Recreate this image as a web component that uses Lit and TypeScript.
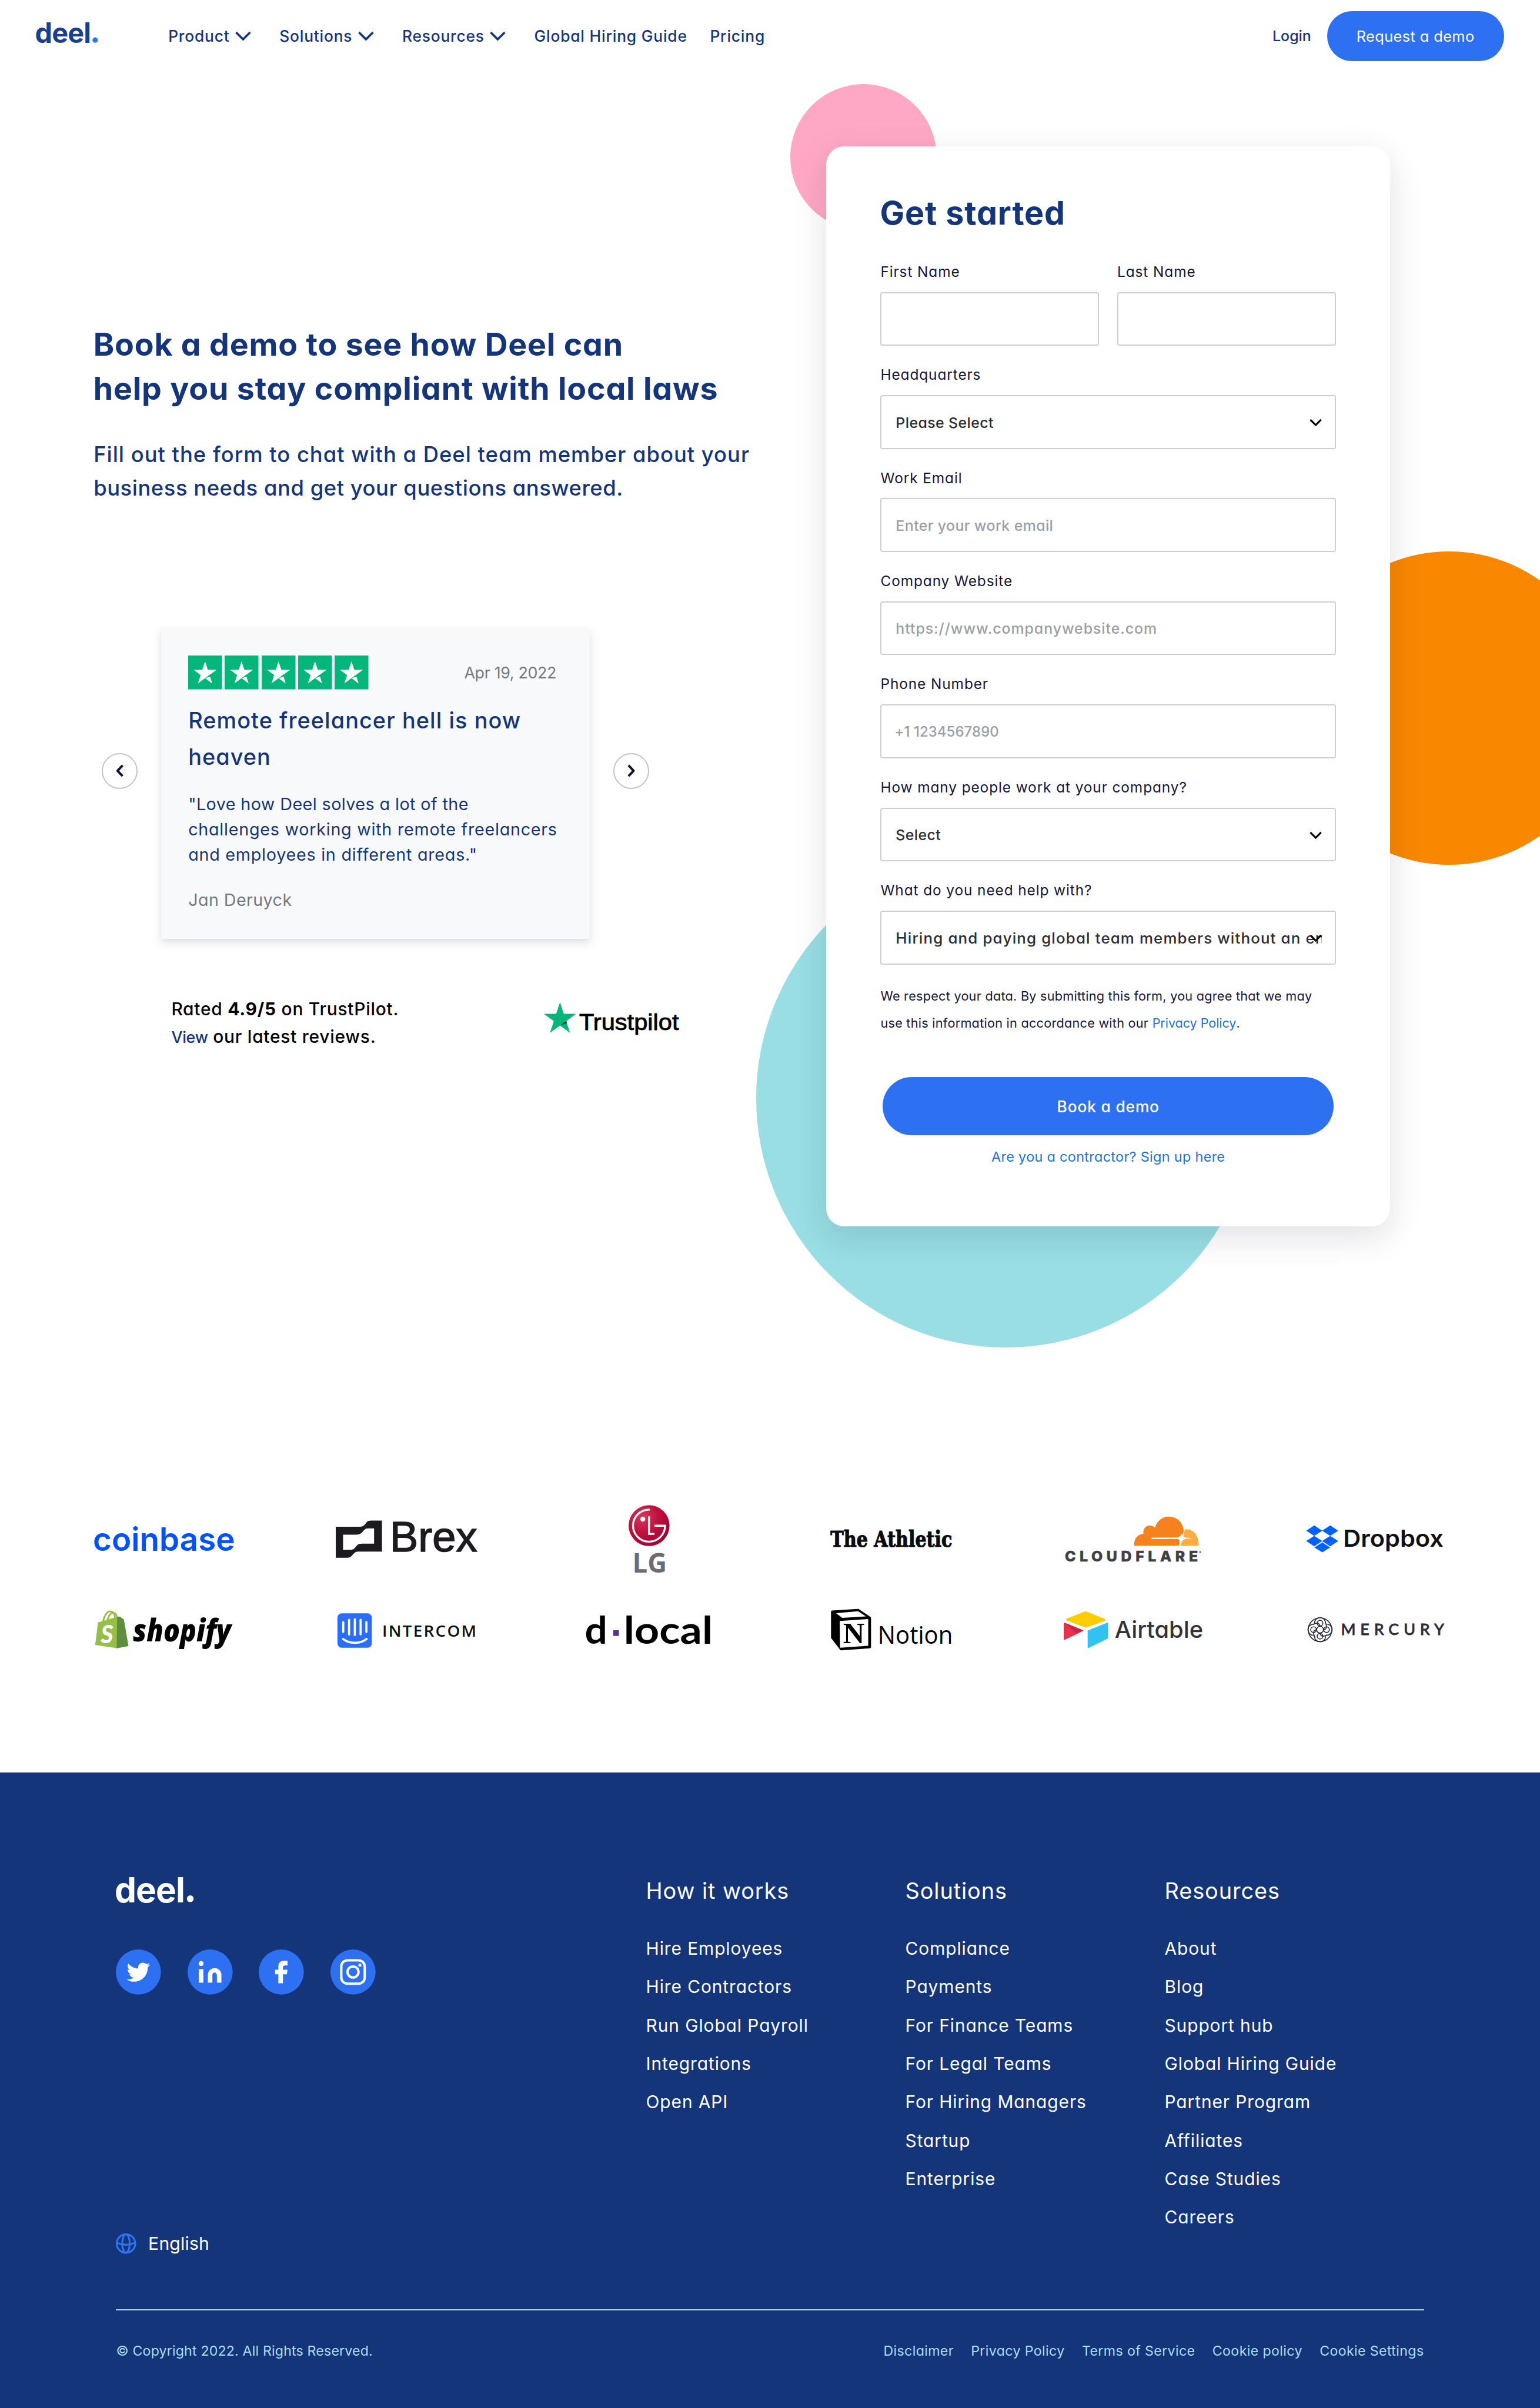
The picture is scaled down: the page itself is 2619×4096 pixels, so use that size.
import { LitElement, html, svg, css, nothing } from "lit";
import { customElement } from "lit/decorators.js";

const base = css`
  :host { display: block; box-sizing: border-box; }
  *, *::before, *::after { box-sizing: border-box; }
  h1, h2, h3, p, ul { margin: 0; padding: 0; font-weight: inherit; font-size: inherit; }
  a { color: inherit; text-decoration: none; }
  svg { display: block; flex: none; overflow: visible; }
`;

const deelLogo = (width: number, height: number, color: string, dot: string) => html`
  <svg width=${width} height=${height} viewBox="0 0 138 47" role="img" aria-label="deel">
    <text x="-2" y="46.5" font-family="Inter" font-weight="700" font-size="62" fill=${color}
      textLength="124" lengthAdjust="spacingAndGlyphs" letter-spacing="-1">deel</text>
    <circle cx="132" cy="40.5" r="6" fill=${dot}></circle>
  </svg>`;

/* ---------- Header ---------- */

const navItems = [
  { label: "Product", menu: true },
  { label: "Solutions", menu: true },
  { label: "Resources", menu: true },
  { label: "Global Hiring Guide", menu: false },
  { label: "Pricing", menu: false },
];

@customElement("site-header")
export class SiteHeader extends LitElement {
  static styles = [base, css`
    .bar { display: flex; align-items: center; height: 128px; padding: 0 64px; color: #15357a; font-size: 27.5px; font-weight: 500; }
    .logo { margin-right: 124.5px; margin-top: -13px; }
    .nav { display: flex; gap: 40.4px; letter-spacing: 0.82px; }
    .link { display: flex; align-items: center; gap: 10px; }
    .caret { margin-right: 10px; }
    .login { font-size: 26px; }
    .actions { display: flex; align-items: center; gap: 28px; margin-left: auto; }
    .cta { display: flex; align-items: center; justify-content: center; width: 314px; height: 88px; border-radius: 44px;
      background: #2d71f2; color: #fff; font-size: 26.5px; font-weight: 400; letter-spacing: 0.4px; }
  `];
  render() {
    return html`<header class="bar">
      <a class="logo">${deelLogo(110, 38, "#1b3f8f", "#2e74f3")}</a>
      <nav class="nav">
        ${navItems.map(i => html`<a class="link">${i.label}${i.menu ? html`
          <svg class="caret" width="28" height="17" viewBox="0 0 28 17" fill="none" stroke="#15357a" stroke-width="3.8"><path d="M1.5 2l12.5 12.5L26.5 2"></path></svg>` : nothing}</a>`)}
      </nav>
      <div class="actions"><a class="login">Login</a><a class="cta">Request a demo</a></div>
    </header>`;
  }
}

/* ---------- Reviews ---------- */

@customElement("review-carousel")
export class ReviewCarousel extends LitElement {
  static styles = [base, css`
    .row { display: flex; align-items: center; margin-left: 11px; }
    .arrow { display: flex; align-items: center; justify-content: center; width: 64px; height: 64px; margin-bottom: 44px;
      border: 2.1px solid #c4c4c8; border-radius: 50%; background: #fff; flex: none; }
    .card { width: 760px; height: 551px; margin: 0 42px; padding: 48.5px 59px 0 48px; background: #f8f9fb;
      box-shadow: 0 8px 16px rgba(30, 40, 60, 0.13), 0 2px 8px rgba(30, 40, 60, 0.04); flex: none; }
    .head { display: flex; align-items: center; justify-content: space-between; height: 60px; }
    .stars { display: flex; gap: 5px; }
    .date { font-size: 28px; letter-spacing: -0.35px; color: #777782; }
    .title { margin-top: 24px; font-size: 39.5px; line-height: 64px; font-weight: 500; letter-spacing: 1.1px; color: #15357a; }
    .quote { margin-top: 28.5px; font-size: 30px; line-height: 45px; letter-spacing: 0.76px; color: #15357a; white-space: nowrap; }
    .first { letter-spacing: 0.42px; }
    .author { margin-top: 36px; font-size: 30px; line-height: 45px; letter-spacing: 0.4px; color: #777782; }
    .summary { display: flex; margin: 101px 0 0 135px; width: 901px; justify-content: space-between; align-items: flex-start; }
    .rating { font-size: 31.2px; line-height: 48px; font-weight: 500; letter-spacing: 0.78px; color: #000; }
    .view { font-size: 28px; letter-spacing: -0.3px; color: #15357a; }
    .pilot { margin-top: 10.5px; }
  `];
  render() {
    const star = svg`<rect width="60" height="60" fill="#04b67a"></rect>
      <path d="M30 10.5L34.9 25.2H50.6L38 34.3L30 40L39 37.8L42.6 49.5L30 40.2L17.4 49.5L22.2 34.6L9.6 25.2H25.1Z" fill="#fff"></path>`;
    return html`
      <div class="row">
        <a class="arrow"><svg width="14" height="23" viewBox="0 0 14 23" fill="none" stroke="#10122e" stroke-width="4.2" stroke-linejoin="round"><path d="M12 2L3 11.5L12 21"></path></svg></a>
        <article class="card">
          <div class="head">
            <div class="stars">${[1, 2, 3, 4, 5].map(() => html`<svg width="60" height="60" viewBox="0 0 60 60">${star}</svg>`)}</div>
            <span class="date">Apr 19, 2022</span>
          </div>
          <h3 class="title">Remote freelancer hell is now<br>heaven</h3>
          <p class="quote"><span class="first">"Love how Deel solves a lot of the</span><br>challenges working with remote freelancers<br>and employees in different areas."</p>
          <p class="author">Jan Deruyck</p>
        </article>
        <a class="arrow"><svg width="14" height="23" viewBox="0 0 14 23" fill="none" stroke="#10122e" stroke-width="4.2" stroke-linejoin="round"><path d="M2 2L11 11.5L2 21"></path></svg></a>
      </div>
      <div class="summary">
        <p class="rating">Rated <b>4.9/5</b> on TrustPilot.<br><a class="view">View</a> our latest reviews.</p>
        <svg class="pilot" width="240" height="60" viewBox="0 0 240 60">
          <path d="M28.5 1L35.3 21.4H57L39.6 34.4L46.2 55L28.5 42.3L10.8 55L17.6 34.4L0 21.4H21.7Z" fill="#04b67a"></path>
          <path d="M41 38L39.5 33.8L28.5 42.3Z" fill="#0b4b33"></path>
          <text x="62.5" y="50.5" font-family="Liberation Sans" font-weight="400" font-size="41" fill="#000" stroke="#000" stroke-width="0.9" textLength="177" lengthAdjust="spacingAndGlyphs">Trustpilot</text>
        </svg>
      </div>`;
  }
}

/* ---------- Form ---------- */

type Field = { label: string; value?: string; hint?: string; select?: boolean; half?: boolean; spacing?: string };

const fields: Field[] = [
  { label: "First Name", half: true },
  { label: "Last Name", half: true },
  { label: "Headquarters", value: "Please Select", select: true },
  { label: "Work Email", hint: "Enter your work email" },
  { label: "Company Website", hint: "https://www.companywebsite.com", spacing: "url" },
  { label: "Phone Number", hint: "+1 1234567890", spacing: "phone" },
  { label: "How many people work at your company?", value: "Select", select: true },
  { label: "What do you need help with?", value: "Hiring and paying global team members without an entity", select: true, spacing: "wide" },
];

@customElement("demo-form")
export class DemoForm extends LitElement {
  static styles = [base, css`
    .card { width: 1000px; height: 1916px; padding: 87px 96px 0; border-radius: 32px; background: #fff; color: #15173a;
      box-shadow: 0 18px 60px rgba(20, 24, 50, 0.13); }
    .heading { font-size: 58px; line-height: 60px; font-weight: 700; letter-spacing: 0.9px; margin-left: -1px; color: #15357a; }
    .fields { display: grid; grid-template-columns: 1fr 1fr; column-gap: 32px; row-gap: 35.4px; margin-top: 59px; }
    .field { grid-column: span 2; min-width: 0; }
    .half { grid-column: span 1; }
    .label { display: block; font-size: 25.5px; line-height: 32px; letter-spacing: 0.92px; }
    .control { position: relative; display: flex; align-items: center; height: 95.6px; margin-top: 20px; padding: 0 23px 0 25px;
      border: 2.1px solid #cfcfd2; border-radius: 4px; font-size: 26px; font-weight: 500; letter-spacing: 0.4px; color: #2c2c34; }
    .text { flex: 1; overflow: hidden; white-space: nowrap; line-height: 40px; margin-top: 2px; }
    .hint { color: #9a9fa3; }
    .url { letter-spacing: 0.97px; }
    .phone { font-size: 25px; letter-spacing: 0.06px; margin-left: -2px; }
    .wide { font-size: 27px; letter-spacing: 1.18px; }
    .caret { position: absolute; right: 23px; top: 40px; }
    .legal { margin-top: 31.8px; font-size: 22.6px; line-height: 48px; letter-spacing: 0.26px; white-space: nowrap; }
    .blue { letter-spacing: -0.1px; color: #1d74d0; }
    .submit { display: flex; align-items: center; justify-content: center; height: 104px; margin: 71.6px 4px 0; border-radius: 52px;
      background: #2d71f2; color: #fff; font-size: 27.5px; font-weight: 500; letter-spacing: 0.85px; }
    .contractor { display: block; margin-top: 22px; text-align: center; font-size: 24.5px; line-height: 32px; letter-spacing: 0.3px; color: #1d74d0; }
  `];
  render() {
    return html`<section class="card">
      <h2 class="heading">Get started</h2>
      <div class="fields">
        ${fields.map(f => html`<div class="field ${f.half ? "half" : ""}">
          <span class="label">${f.label}</span>
          <div class="control">
            ${f.value || f.hint ? html`<span class="text ${f.hint ? "hint" : ""} ${f.spacing ?? ""}">${f.value ?? f.hint}</span>` : nothing}
            ${f.select ? html`<svg class="caret" width="22" height="14" viewBox="0 0 22 14" fill="none" stroke="#000" stroke-width="3.2"><path d="M1.5 2L11 11.5L20.5 2"></path></svg>` : nothing}
          </div>
        </div>`)}
      </div>
      <p class="legal">We respect your data. By submitting this form, you agree that we may<br>use this information in accordance with our <a class="blue">Privacy Policy</a>.</p>
      <a class="submit">Book a demo</a>
      <a class="contractor">Are you a contractor? Sign up here</a>
    </section>`;
  }
}

/* ---------- Customer logos ---------- */

const word = (text: string, x: number, y: number, length: number, size: number, weight: number, fill: string, family = "Inter", slant = "normal") =>
  svg`<text x=${x} y=${y} textLength=${length} lengthAdjust="spacingAndGlyphs" font-size=${size} font-weight=${weight}
    font-family=${family} font-style=${slant} fill=${fill}>${text}</text>`;

const spaced = (text: string, x: number, y: number, length: number, size: number, weight: number, fill: string, family = "Inter") =>
  svg`<text x=${x} y=${y} textLength=${length} font-size=${size} font-weight=${weight} font-family=${family} fill=${fill}>${text}</text>`;

const logos = [
  svg`${word("coinbase", -1, 92, 252, 58, 600, "#0052ff")}`,

  svg`<path fill="#1d1a20" fill-rule="evenodd" d="M0 49H43C49 49 51 46 54 42C56 39 59 38 63 38H82V93H40C35 93 32 96 29 100C27 103 24 104 20 104H0ZM13 63V90H26C33 90 34 86 37 83C39 80 42 79 47 79H68V52H58C52 52 50 55 47 59C44 62 41 63 36 63Z"></path>
    <g stroke="#1d1a20" stroke-width="1.6">${word("Brex", 96, 93, 155, 75, 400, "#1d1a20", "Liberation Sans")}</g>`,

  svg`<defs><radialGradient id="lg" cx="0.35" cy="0.3" r="0.8"><stop offset="0" stop-color="#d5385f"></stop><stop offset="0.5" stop-color="#bf0f3d"></stop><stop offset="1" stop-color="#9c0030"></stop></radialGradient></defs>
    <circle cx="125" cy="47" r="36.3" fill="url(#lg)"></circle>
    <g fill="none" stroke="#fff" stroke-width="3.4"><path d="M126.5 18.6A28.5 28.5 0 1 0 153.5 47.2H134.5"></path><path d="M125 30.5V61.8H134.5"></path></g>
    <circle cx="113.8" cy="35.5" r="4.4" fill="#fff"></circle>
    ${word("LG", 95.5, 130, 61, 48, 700, "#6b6d70", "Open Sans")}`,

  svg`<g stroke="#0c0c0c" stroke-width="1.3">${word("The Athletic", 17, 85, 216, 38.5, 700, "#0c0c0c", "DejaVu Serif")}</g>`,

  svg`<path fill="#f6821f" d="M126 82.7C125 71 132 62 142.5 61.5C141 53 147 46.5 154 47C158 47 161 48.5 163 50.5C166 39 176 31 187.5 31C202 31 212 41 214 55C214 60 212 63 209 66L206 75C207 78 206 81 205 82.7Z"></path>
    <path fill="#fbad41" d="M208 82.7L212 70C214 64 215 58 216 53.5C231 52 241 64 240.5 82.7Z"></path>
    <path fill="#fff" d="M157 68.4L203 68Q209 66 210.5 61Q212 67 218 68.3L230 69.4L218 70.5Q212 72 210 77Q208 72 203 71L157 70.6Z"></path>
    <g stroke="#404041" stroke-width="0.6">${spaced("CLOUDFLARE", 3, 110.7, 236, 26, 800, "#404041")}</g>
    <circle cx="243" cy="94" r="1.4" fill="#404041"></circle>`,

  svg`<path fill="#0061ff" d="M15.7 46.8L30 56L15.7 65.2L1.5 56ZM44 46.8L58.3 56L44 65.2L29.7 56ZM15.7 65.2L30 74.4L15.7 83.6L1.5 74.4ZM44 65.2L58.3 74.4L44 83.6L29.7 74.4ZM30 76.8L44 85.9L30 94.5L16 85.9Z"></path>
    ${word("Dropbox", 67, 85, 178, 41, 600, "#111")}`,

  svg`<g fill="none" stroke="#95bf47" stroke-width="3"><path d="M17 55C20 42 26 37 30 37.5C36 38 38 43 38 49"></path><path d="M25 53C27 43 32 40 35 40C39 40 41 44 41.5 48"></path></g>
    <path fill="#95bf47" d="M8 57L43 46.7V103L3 97Z"></path><path fill="#5e8e3e" d="M42 46.7L47 47L54 52L62 99L41 103Z"></path>
    ${word("S", 13, 93.5, 22, 44, 900, "#fff", "Lato", "italic")}
    ${word("shopify", 70, 91, 174, 55, 800, "#000", "Open Sans", "italic")}`,

  svg`<rect x="3" y="41" width="61" height="61" rx="7.5" fill="#286efa"></rect>
    <path d="M13.3 56.5V74M23.6 52.5V78.5M33.8 51.5V79.5M44 52.5V78.5M54.3 56.5V74M13 86.5C24 95.5 44 95.5 54.6 86.5" fill="none" stroke="#fff" stroke-width="3.8" stroke-linecap="round"></path>
    ${spaced("INTERCOM", 82.5, 82.7, 167, 29, 600, "#111", "Open Sans")}`,

  svg`${word("d", 11, 95, 40, 67, 700, "#000", "Lato")}<rect x="61.5" y="71" width="10" height="10" fill="#5a2d91"></rect>${word("local", 80, 95, 158, 67, 700, "#000", "Lato")}`,

  svg`<path fill="#000" stroke="#000" stroke-width="4" stroke-linejoin="round" d="M20 38L66 35L87 49V101L36 104.7L20 84Z"></path>
    <path fill="#fff" d="M27 40.7L66 37.3L80 46.5L38 49Z"></path><path fill="#fff" stroke="#fff" stroke-width="2" stroke-linejoin="round" d="M34.5 55.5L83 52V97.5L35 101Z"></path>
    ${word("N", 39.5, 94.3, 38, 53, 700, "#000", "Liberation Serif")}
    ${word("Notion", 101, 94.7, 133, 44, 400, "#000", "Open Sans")}`,

  svg`<path fill="#ffcc00" stroke="#ffcc00" stroke-width="3" stroke-linejoin="round" d="M40 38.8L74 52.6L40.5 64.8L6.5 52Z"></path>
    <path fill="#ee2f4a" stroke="#ee2f4a" stroke-width="2" stroke-linejoin="round" d="M2 58.5L34.5 71.5L2 87.3Z"></path><path fill="#c22746" d="M3 58L36 71.3L24 76.5Z"></path>
    <path fill="#31c2f2" stroke="#31c2f2" stroke-width="2" stroke-linejoin="round" d="M44.5 72L78.7 58.5V85L44.5 101.5Z"></path>
    <g style="font-feature-settings:'cv11'">${word("Airtable", 91.5, 85, 157, 41.5, 500, "#333")}</g>`,

  svg`<g fill="none" stroke="#2b2b3c" stroke-width="1.7"><circle cx="26" cy="70" r="21"></circle><circle cx="26" cy="70" r="6"></circle>
      ${[0, 90, 180, 270].map(a => svg`<g transform="rotate(${a} 26 70)"><circle cx="26" cy="58.5" r="5"></circle><path d="M16 58.5A10 10 0 0 1 36 58.5"></path><path d="M32 70A6 6 0 0 0 37.5 64.5A16 16 0 0 0 35 57"></path></g>`)}</g>
    <g stroke="#2b2b3c" stroke-width="0.8">${spaced("MERCURY", 63, 79, 183, 28, 500, "#2b2b3c", "Lato")}</g>`,
];

@customElement("logo-wall")
export class LogoWall extends LitElement {
  static styles = [base, css`
    .grid { display: grid; grid-template-columns: repeat(6, 250px); column-gap: 180px; row-gap: 22px; padding: 0 166px; font-feature-settings: normal; }
  `];
  render() {
    return html`<div class="grid">${logos.map(l => html`<svg width="250" height="140" viewBox="0 0 250 140">${l}</svg>`)}</div>`;
  }
}

/* ---------- Footer ---------- */

const columns = [
  { title: "How it works", links: ["Hire Employees", "Hire Contractors", "Run Global Payroll", "Integrations", "Open API"] },
  { title: "Solutions", links: ["Compliance", "Payments", "For Finance Teams", "For Legal Teams", "For Hiring Managers", "Startup", "Enterprise"] },
  { title: "Resources", links: ["About", "Blog", "Support hub", "Global Hiring Guide", "Partner Program", "Affiliates", "Case Studies", "Careers"] },
];

const social = [
  svg`<path transform="translate(19.3 19.6) scale(1.73)" fill="#fff" d="M24 4.557c-.883.392-1.832.656-2.828.775 1.017-.609 1.798-1.574 2.165-2.724-.951.564-2.005.974-3.127 1.195-.897-.957-2.178-1.555-3.594-1.555-3.179 0-5.515 2.966-4.797 6.045-4.091-.205-7.719-2.165-10.148-5.144-1.29 2.213-.669 5.108 1.523 6.574-.806-.026-1.566-.247-2.229-.616-.054 2.281 1.581 4.415 3.949 4.89-.693.188-1.452.232-2.224.084.626 1.956 2.444 3.379 4.6 3.419-2.07 1.623-4.678 2.348-7.29 2.04 2.179 1.397 4.768 2.212 7.548 2.212 9.142 0 14.307-7.721 13.995-14.646.962-.695 1.797-1.562 2.457-2.549z"></path>`,
  svg`<circle cx="24" cy="25" r="4.3" fill="#fff"></circle><path fill="#fff" d="M20 35H28V59H20ZM36 59V45A12 12 0 0 1 60 45V59H52V45.5A4 4.6 0 0 0 44 45.5V59Z"></path>`,
  svg`<path fill="#fff" d="M29 36H34.8V31C34.8 24 38 20 45 20H51V28.4H47C44 28.4 43 29.4 43 32V36H51L50 44H43V60H34.8V44H29Z"></path>`,
  svg`<rect x="19.2" y="19.2" width="41.6" height="41.6" rx="11" fill="none" stroke="#fff" stroke-width="4.2"></rect><circle cx="40" cy="40" r="9.8" fill="none" stroke="#fff" stroke-width="4.2"></circle><circle cx="52.3" cy="27.8" r="2.7" fill="#fff"></circle>`,
];

@customElement("site-footer")
export class SiteFooter extends LitElement {
  static styles = [base, css`
    .footer { height: 1128px; padding: 184px 206px 0; background: #15357a; color: #fff; }
    .top { display: grid; grid-template-columns: 940px 460px 460px 1fr; height: 769px; }
    .brand { display: flex; flex-direction: column; }
    .social { display: flex; gap: 46.6px; margin-top: 83px; }
    .lang { display: flex; align-items: center; gap: 21px; margin-top: 404px; font-size: 31.5px; line-height: 76px; letter-spacing: 0.15px; }
    .title { margin-top: 1.5px; font-size: 39.5px; line-height: 50px; letter-spacing: 0.95px; }
    .column { display: flex; flex-direction: column; }
    .links { display: flex; flex-direction: column; margin-top: 43.5px; font-size: 31.2px; line-height: 68.1px; letter-spacing: 0.95px; }
    .base { display: flex; justify-content: space-between; border-top: 2.1px solid #9fd8ef; padding-top: 54px; font-size: 24.2px; line-height: 36px; letter-spacing: 0.16px; color: #a9ddf0; }
    .legal { display: flex; gap: 30.6px; letter-spacing: 0.38px; }
  `];
  render() {
    return html`<footer class="footer">
      <div class="top">
        <div class="brand">
          <a>${deelLogo(138, 47, "#fff", "#fff")}</a>
          <div class="social">${social.map(s => html`<a><svg width="80" height="80" viewBox="0 0 80 80"><circle cx="40" cy="40" r="40" fill="#2d71f2"></circle>${s}</svg></a>`)}</div>
          <div class="lang">
            <svg width="36" height="36" viewBox="0 0 36 36" fill="none" stroke="#2e74f3" stroke-width="3.2"><circle cx="18" cy="18" r="16.4"></circle><ellipse cx="18" cy="18" rx="6.6" ry="16.4"></ellipse><path d="M2 16.5Q18 24 34 16.5"></path></svg>
            <span>English</span>
          </div>
        </div>
        ${columns.map(c => html`<nav class="column"><h3 class="title">${c.title}</h3><div class="links">${c.links.map(l => html`<a>${l}</a>`)}</div></nav>`)}
      </div>
      <div class="base">
        <span>© Copyright 2022. All Rights Reserved.</span>
        <div class="legal">${["Disclaimer", "Privacy Policy", "Terms of Service", "Cookie policy", "Cookie Settings"].map(l => html`<a>${l}</a>`)}</div>
      </div>
    </footer>`;
  }
}

/* ---------- Page ---------- */

@customElement("app-root")
export class AppRoot extends LitElement {
  static styles = [base, css`
    :host { width: 2732px; height: 4272.8px; zoom: 0.95864; overflow: hidden; background: #fff;
      font-family: Inter, "Open Sans", sans-serif; font-feature-settings: "cv11"; }
    .page { display: flex; flex-direction: column; height: 4272.8px; }
    .hero { position: relative; display: flex; justify-content: space-between; height: 2532px; padding: 132px 266px 0 169px; overflow: hidden; }
    .dot { position: absolute; border-radius: 50%; }
    .pink { left: 1402px; top: 21px; width: 260px; height: 260px; background: #fea8c5; }
    .orange { left: 2293px; top: 850px; width: 556px; height: 556px; background: #f98700; }
    .teal { left: 1342px; top: 1378px; width: 885px; height: 885px; background: #98dee4; }
    .intro { padding-top: 313px; white-space: nowrap; color: #15357a; }
    .headline { margin-left: -3.5px; font-size: 56px; line-height: 78px; font-weight: 700; letter-spacing: 0.84px; }
    .lead { margin: 48px 0 0 -3px; font-size: 38px; line-height: 60px; font-weight: 500; letter-spacing: 1.02px; }
    .tight { letter-spacing: 0.55px; }
    .reviews { margin-top: 217.6px; }
    .form { position: relative; }
    .footer { margin-top: auto; }
  `];
  render() {
    return html`<div class="page">
      <site-header></site-header>
      <main class="hero">
        <div class="dot pink"></div><div class="dot orange"></div><div class="dot teal"></div>
        <div class="intro">
          <h1 class="headline">Book a demo to see how Deel can<br>help you stay compliant with local laws</h1>
          <p class="lead">Fill out the form to chat with a Deel team member about your<br><span class="tight">business needs and get your questions answered.</span></p>
          <review-carousel class="reviews"></review-carousel>
        </div>
        <demo-form class="form"></demo-form>
      </main>
      <logo-wall></logo-wall>
      <site-footer class="footer"></site-footer>
    </div>`;
  }
}
